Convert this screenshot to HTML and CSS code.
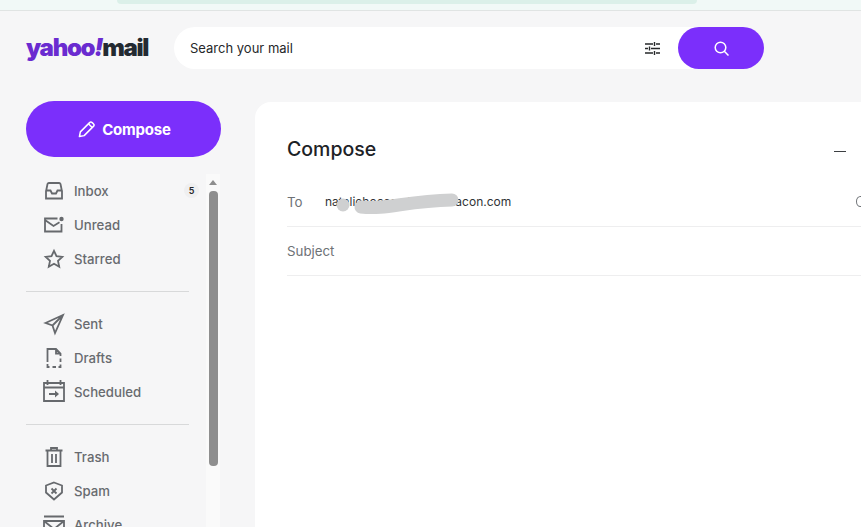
FILE: index.html
```html
<!DOCTYPE html>
<html lang="en">
<head>
<meta charset="utf-8">
<title>Yahoo Mail</title>
<link rel="stylesheet" href="styles.css">
</head>
<body>
<div class="banner"><div class="banner-pill"></div></div>
<div class="app">
  <header class="topbar">
    <div class="logo"><span class="logo-yahoo">yahoo<i>!</i></span><span class="logo-mail">mail</span></div>
    <div class="search">
      <span class="search-text">Search your mail</span>
      <svg class="filter-icon" width="15" height="13" viewBox="0 0 15 13" fill="none" stroke="#26282a" stroke-width="1.4"><path d="M0 2h8M11 2h4M0 6.500h3M6 6.500h9M0 11h8M11 11h4M9.500 0v4M4.500 4.500v4M9.500 9v4"/></svg>
      <button class="search-btn"><svg width="15" height="15" viewBox="0 0 15 15" fill="none" stroke="#fff" stroke-width="1.5"><circle cx="6.500" cy="6.500" r="5.300"/><path d="M10.300 10.300l4.200 4.200"/></svg></button>
    </div>
  </header>
  <div class="body">
    <aside class="sidebar">
      <button class="compose-btn"><svg width="18" height="18" viewBox="0 0 19 19" fill="none" stroke="#fff" stroke-width="1.6" stroke-linejoin="round"><path d="M1.500 17.500l1-5L12.500 2.500a1.500 1.500 0 0 1 2.200 0l1.800 1.800a1.500 1.500 0 0 1 0 2.200L6.500 16.500z"/><path d="M11 4l4 4"/></svg><span>Compose</span></button>
      <nav class="nav">
        <div class="nav-scroll">
          <ul class="group">
            <li class="item"><svg class="ico" viewBox="0 0 20 20"><path d="M2 10.500L3.500 3a1.500 1.500 0 0 1 1.500-1h10a1.500 1.500 0 0 1 1.500 1L18 10.500M2 9.500v8h16v-8M2 9.500h4.500L8 12.500h4l1.500-3H18"/></svg><span>Inbox</span><b class="badge">5</b></li>
            <li class="item"><svg class="ico" viewBox="0 0 20 20"><path d="M13.500 3.500H1v13h16.500V9M1 5l8.500 6 6-3.800"/><circle class="dot" cx="17.500" cy="4" r="2.200"/></svg><span>Unread</span></li>
            <li class="item"><svg class="ico" viewBox="0 0 20 20"><path d="M10 1.800l2.500 5.400 5.800.7-4.300 4 1.200 5.800L10 14.800l-5.200 2.900L6 11.900l-4.300-4 5.800-.7z"/></svg><span>Starred</span></li>
          </ul>
          <ul class="group">
            <li class="item"><svg class="ico" viewBox="0 0 20 20"><path d="M1.500 9L19 1l-8 18-2.500-7.500zM8.500 11.500L19 1"/></svg><span>Sent</span></li>
            <li class="item"><svg class="ico" viewBox="0 0 20 20"><path d="M3.500 14V1H12l4.500 4.500V8M16.500 10.500V14M3.500 16v3h2M8.500 19H12M14.500 19h2v-2.500M12 1v4.500h4.500"/></svg><span>Drafts</span></li>
            <li class="item"><svg class="ico ico-wide" viewBox="0 0 20 20"><path d="M0 3h20v18H0zM0 7.500h20M3.500 0v5M16.500 0v5M5 14h9"/><path class="dot" d="M11 10.500l4 3.500-4 3.500z"/></svg><span>Scheduled</span></li>
          </ul>
          <ul class="group">
            <li class="item"><svg class="ico" viewBox="0 0 20 20"><path d="M1.500 3.500h17M7 3V1h6v2M3.500 4v15h13V4M8 7v9M12 7v9"/></svg><span>Trash</span></li>
            <li class="item"><svg class="ico" viewBox="0 0 20 20"><path d="M10 1.500L18 4.500v7L10 18.500 2 11.500v-7zM7.500 7.500l5 5M12.500 7.500l-5 5"/></svg><span>Spam</span></li>
            <li class="item"><svg class="ico" viewBox="0 0 20 20"><path d="M0 1.500h20M0 6h20v14H0zM0 6l10 8 10-8"/></svg><span>Archive</span></li>
          </ul>
        </div>
        <div class="scrollbar">
          <div class="scroll-arrow"></div>
          <div class="scroll-thumb"></div>
        </div>
      </nav>
    </aside>
    <main class="panel">
      <div class="panel-head">
        <h1>Compose</h1>
        <span class="minimize"></span>
      </div>
      <div class="field field-to">
        <label>To</label>
        <div class="recipient">nataliehocean@xxxxxxacon.com<svg class="redact" width="135" height="22" viewBox="0 0 135 22"><path d="M36 14C62 17 80 8 127 7" stroke="#cfd0d1" stroke-width="13" stroke-linecap="round" fill="none"/><circle cx="18" cy="12" r="6.500" fill="#cfd0d1"/></svg></div>
        <span class="cc-hint"></span>
      </div>
      <div class="field field-subject">
        <label>Subject</label>
      </div>
    </main>
  </div>
</div>
</body>
</html>
```
FILE: styles.css
```css
* { box-sizing: border-box; }
html, body { margin: 0; height: 100%; }
body {
  width: 861px;
  height: 527px;
  overflow: hidden;
  background: #f6f6f7;
  font-family: Inter, "Liberation Sans", sans-serif;
  color: #26282a;
}
.banner {
  height: 11px;
  background: #f1f9f7;
  border-bottom: 1px solid #e0e4e3;
  padding-left: 117px;
}
.banner-pill {
  width: 580px;
  height: 4px;
  background: #dbf0e9;
  border-radius: 0 0 12px 12px;
}
.app { display: flex; flex-direction: column; height: 516px; }
.topbar {
  display: flex;
  align-items: center;
  padding: 16px 0 0 26px;
  height: 58px;
}
.logo {
  width: 148px;
  font-family: Inter, sans-serif;
  font-weight: 900;
  font-size: 24px;
  line-height: 42px;
  letter-spacing: -1.300px;
  white-space: nowrap;
}
.logo-yahoo { color: #6a2bd0; }
.logo-yahoo i { font-style: italic; font-weight: 900; }
.logo-mail { color: #232a31; }
.search {
  display: flex;
  align-items: center;
  width: 590px;
  height: 42px;
  background: #fff;
  border-radius: 21px;
  padding-left: 16px;
}
.search-text { flex: 1; font-size: 13px; color: #26282a; }
.filter-icon { margin-right: 18px; }
.search-btn {
  display: flex;
  align-items: center;
  justify-content: center;
  width: 86px;
  height: 42px;
  border: 0;
  border-radius: 21px;
  background: #7b2ffb;
  padding: 0;
}
.body { display: flex; flex: 1; min-height: 0; padding-top: 32px; }
.sidebar { width: 229px; padding-left: 26px; flex: none; display: flex; flex-direction: column; min-height: 0; }
.compose-btn {
  display: flex;
  align-items: center;
  justify-content: center;
  gap: 6px;
  width: 195px;
  height: 56px;
  flex: none;
  border: 0;
  border-radius: 28px;
  background: #7b2ffb;
  color: #fff;
  padding: 0 0 0 2px;
  font: 700 15px Inter, sans-serif;
  letter-spacing: -0.2px;
}
.nav { display: flex; flex: 1; min-height: 0; margin-top: 17px; overflow: hidden; }
.nav-scroll { width: 180px; flex: none; }
.group {
  list-style: none;
  margin: 0 0 15px;
  padding: 0 0 15px;
  border-bottom: 1px solid #d8d9da;
  width: 163px;
}
.group:last-child { border: 0; }
.item {
  display: flex;
  align-items: center;
  position: relative;
  height: 34px;
  width: 172px;
  font-size: 13.200px;
  color: #686b6f;
  padding-left: 48px;
  font-weight: 500;
}
.ico {
  position: absolute;
  left: 18px;
  top: 7px;
  width: 20px;
  height: 20px;
  fill: none;
  stroke: #66696d;
  stroke-width: 1.800;
  overflow: visible;
}
.ico-wide { top: 5px; }
.ico .dot { fill: #66696d; stroke: none; }
.badge {
  position: absolute;
  left: 158px;
  top: 9px;
  width: 15px;
  height: 15px;
  line-height: 15px;
  border-radius: 8px;
  background: #efeff0;
  text-align: center;
  font-size: 9px;
  font-weight: 600;
  color: #26282a;
}
.scrollbar {
  position: relative;
  width: 14px;
  background: #fafafa;
  flex: none;
}
.scroll-arrow {
  width: 0; height: 0;
  margin: 6px auto 0;
  border-left: 4px solid transparent;
  border-right: 4px solid transparent;
  border-bottom: 5px solid #8f8f8f;
}
.scroll-thumb {
  width: 9px;
  height: 275px;
  margin: 6px auto 0;
  background: #8f8f8f;
  border-radius: 4px;
}
.panel {
  flex: 1;
  background: #fff;
  border-radius: 16px 0 0 0;
  padding: 0 0 0 32px;
  margin: 1px 0 0 26px;
  min-width: 0;
}
.panel-head {
  display: flex;
  align-items: center;
  justify-content: space-between;
  height: 93px;
  padding-right: 15px;
}
.panel-head h1 {
  margin: 0;
  font-size: 19.500px;
  font-weight: 500;
  color: #1d2226;
}
.minimize { width: 12px; height: 1px; background: #3c3f42; margin-top: 5px; }
.field {
  display: flex;
  align-items: center;
  border-bottom: 1px solid #eeeeef;
  font-size: 13.300px;
  position: relative;
}
.field-to { height: 50px; margin-top: -18px; }
.field-subject { height: 49px; }
.field label { color: #6e7276; }
.recipient {
  position: absolute;
  left: 38px;
  top: 17px;
  font-size: 12px;
  white-space: nowrap;
  color: #303336;
}
.redact { position: absolute; left: 0; top: -1px; overflow: visible; }
.cc-hint {
  position: absolute;
  right: -4px;
  top: 19px;
  width: 9px;
  height: 11px;
  border: 1.500px solid #6e7276;
  border-radius: 50%;
}
```
